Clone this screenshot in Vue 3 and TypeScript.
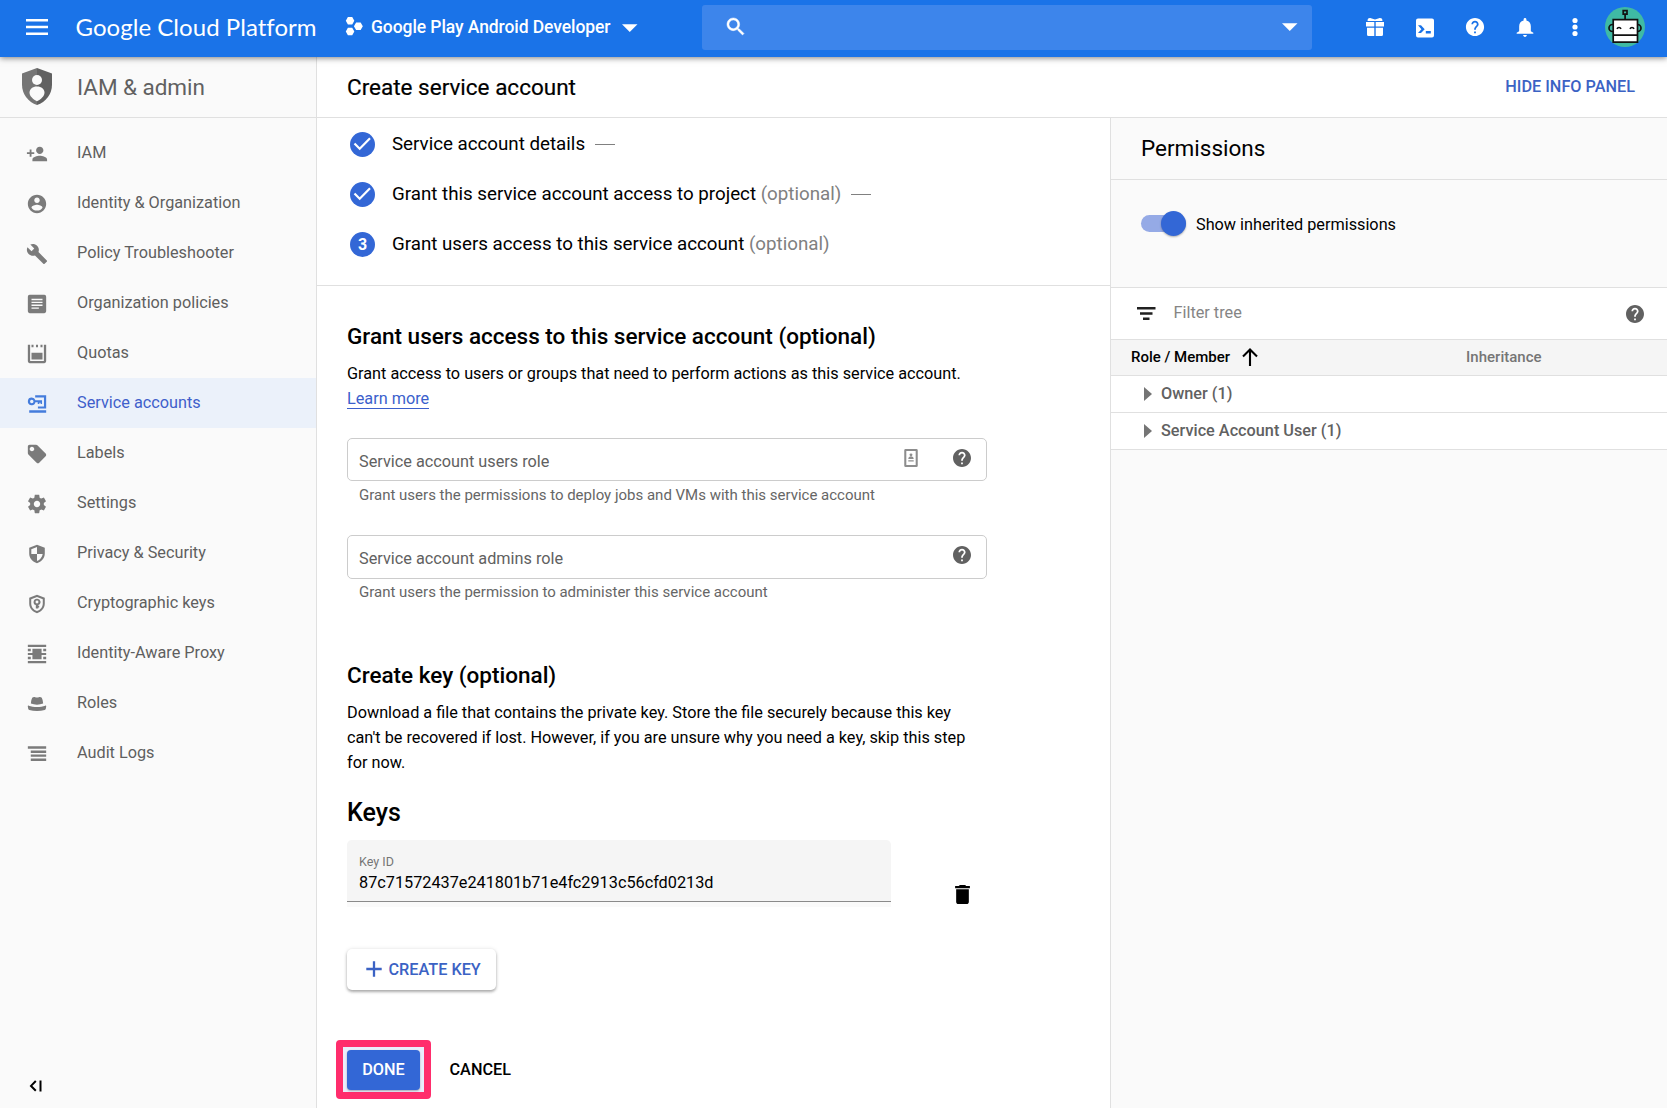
<script setup lang="ts">
import { ref } from 'vue'

interface NavItem { label: string; icon: string; active?: boolean }

const navItems: NavItem[] = [
  { label: 'IAM', icon: 'M15 12c2.21 0 4-1.79 4-4s-1.79-4-4-4-4 1.79-4 4 1.79 4 4 4zm-9-2V7H4v3H1v2h3v3h2v-3h3v-2H6zm9 4c-2.67 0-8 1.34-8 4v2h16v-2c0-2.66-5.33-4-8-4z' },
  { label: 'Identity & Organization', icon: 'M12 2C6.48 2 2 6.48 2 12s4.48 10 10 10 10-4.48 10-10S17.52 2 12 2zm0 3c1.66 0 3 1.34 3 3s-1.34 3-3 3-3-1.34-3-3 1.34-3 3-3zm0 14.2c-2.5 0-4.71-1.28-6-3.22.03-1.99 4-3.08 6-3.08 1.99 0 5.97 1.09 6 3.08-1.29 1.94-3.5 3.22-6 3.22z' },
  { label: 'Policy Troubleshooter', icon: 'M22.7 19l-9.1-9.1c.9-2.3.4-5-1.5-6.9-2-2-5-2.4-7.4-1.3L9 6 6 9 1.6 4.7C.4 7.1.9 10.1 2.9 12.1c1.9 1.9 4.6 2.4 6.9 1.5l9.1 9.1c.4.4 1 .4 1.4 0l2.3-2.3c.5-.4.5-1.1.1-1.4z' },
  { label: 'Organization policies', icon: 'M4 2h16a2 2 0 0 1 2 2v16a2 2 0 0 1-2 2H4a2 2 0 0 1-2-2V4a2 2 0 0 1 2-2zm2 4.4v1.5h12V6.4zm0 3.1V11h12V9.5zm0 3.1v1.5h12v-1.5zm0 3.1v1.5h8v-1.5z' },
  { label: 'Quotas', icon: 'M2 2h2.5v17.5h15V2H22v18a2 2 0 0 1-2 2H4a2 2 0 0 1-2-2zM6 2h2.2v2.5H6zm4.9 0h2.2v2.5h-2.2zm4.9 0H18v2.5h-2.2zM6 10.5h12V18H6z' },
  { label: 'Service accounts', active: true, icon: 'M10 2.5h12V17h-9v-2.4h6.6V4.9H10zM6.3 5a4.2 4.2 0 0 1 4 2.9h7.2v4h-1.6v-1.3h-1.3v1.3h-1.8v-1.7h-2.5A4.2 4.2 0 1 1 6.3 5zm0 2.3a1.9 1.9 0 1 0 0 3.8 1.9 1.9 0 0 0 0-3.8zM3.5 18.8H22v2.7H3.5z' },
  { label: 'Labels', icon: 'M21.41 11.58l-9-9C12.05 2.22 11.55 2 11 2H4c-1.1 0-2 .9-2 2v7c0 .55.22 1.05.59 1.42l9 9c.36.36.86.58 1.41.58s1.05-.22 1.41-.59l7-7c.37-.36.59-.86.59-1.41s-.23-1.06-.59-1.42zM6.5 9C5.12 9 4 7.88 4 6.5S5.12 4 6.5 4 9 5.12 9 6.5 7.88 9 6.5 9z' },
  { label: 'Settings', icon: 'M19.43 12.98c.04-.32.07-.64.07-.98s-.03-.66-.07-.98l2.11-1.65c.19-.15.24-.42.12-.64l-2-3.46c-.12-.22-.39-.3-.61-.22l-2.49 1c-.52-.4-1.08-.73-1.69-.98l-.38-2.65C14.46 2.18 14.25 2 14 2h-4c-.25 0-.46.18-.49.42l-.38 2.65c-.61.25-1.17.59-1.69.98l-2.49-1c-.23-.09-.49 0-.61.22l-2 3.46c-.13.22-.07.49.12.64l2.11 1.65c-.04.32-.07.65-.07.98s.03.66.07.98l-2.11 1.65c-.19.15-.24.42-.12.64l2 3.46c.12.22.39.3.61.22l2.49-1c.52.4 1.08.73 1.69.98l.38 2.65c.03.24.24.42.49.42h4c.25 0 .46-.18.49-.42l.38-2.65c.61-.25 1.17-.59 1.69-.98l2.49 1c.23.09.49 0 .61-.22l2-3.46c.12-.22.07-.49-.12-.64l-2.11-1.65zM12 15.5c-1.93 0-3.5-1.57-3.5-3.5s1.57-3.5 3.5-3.5 3.5 1.57 3.5 3.5-1.57 3.5-3.5 3.5z' },
  { label: 'Privacy & Security', icon: 'M12 2L3.5 5.2v6.3c0 5 3.6 9.3 8.5 10.5 4.9-1.2 8.5-5.5 8.5-10.5V5.2L12 2zm0 9.9h6.2c-.5 3.5-2.9 6.6-6.2 7.7v-7.7H5.8V6.7L12 4.4v7.5z' },
  { label: 'Cryptographic keys', icon: 'M12 2L3.5 5.2v6.3c0 5 3.6 9.3 8.5 10.5 4.9-1.2 8.5-5.5 8.5-10.5V5.2L12 2zm0 2.3l6.3 2.4v4.8c0 3.8-2.6 7.1-6.3 8.2-3.7-1.1-6.3-4.4-6.3-8.2V6.7L12 4.3zm0 1.9a3.6 3.6 0 0 0-1.3 7V17h2.7v-1.2h1v-1.8h-1v-.8A3.6 3.6 0 0 0 12 6.2zm0 2a1.6 1.6 0 1 1 0 3.2 1.6 1.6 0 0 1 0-3.2z' },
  { label: 'Identity-Aware Proxy', icon: 'M2 2h20v2.3H2zM2 19.7h20V22H2zM2 6.3h3.2v2.6H2zM18.8 6.3H22v2.6h-3.2zM2 15.1h3.2v2.6H2zM18.8 15.1H22v2.6h-3.2zM2 10.9h5V6.3h10v4.6h5v2.2h-5v4.6H7v-4.6H2z' },
  { label: 'Roles', icon: 'M6.8 5.2C7.5 4.2 9 4 10 4.5c1.3.6 2.7.6 4 0 1-.5 2.5-.3 3.2.7.8 1.5 1.3 4 1.5 6.3-2 .8-4.3 1.2-6.7 1.2s-4.7-.4-6.7-1.2c.2-2.3.7-4.8 1.5-6.3zM3 13.8c5 2 13 2 18 0 .7-.2 1.2.3 1 1.1l-.4 2.3c-.1.7-.5 1.1-1.2 1.3-5 1.5-11.8 1.5-16.8 0-.7-.2-1.1-.6-1.2-1.3L2 14.9c-.2-.8.3-1.3 1-1.1z' },
  { label: 'Audit Logs', icon: 'M2 3.5h20v2.7H2zM5.2 8.2H22v2.6H5.2zM5.2 12.5H22v2.6H5.2zM5.2 16.8H22v2.7H5.2z' },
]

const helpPath = 'M12 2C6.48 2 2 6.48 2 12s4.48 10 10 10 10-4.48 10-10S17.52 2 12 2zm1 17h-2v-2h2v2zm2.07-7.75l-.9.92C13.45 12.9 13 13.5 13 15h-2v-.5c0-1.1.45-2.1 1.17-2.83l1.24-1.26c.37-.36.59-.86.59-1.41 0-1.1-.9-2-2-2s-2 .9-2 2H8c0-2.21 1.79-4 4-4s4 1.79 4 4c0 .88-.36 1.68-.93 2.25z'

const steps = [
  { label: 'Service account details', optional: false, done: true },
  { label: 'Grant this service account access to project', optional: true, done: true },
  { label: 'Grant users access to this service account', optional: true, done: false },
]

const fields = [
  { label: 'Service account users role', hint: 'Grant users the permissions to deploy jobs and VMs with this service account', contact: true },
  { label: 'Service account admins role', hint: 'Grant users the permission to administer this service account', contact: false },
]

const roles = ['Owner (1)', 'Service Account User (1)']
const showInherited = ref(true)
</script>

<template>
  <div class="app">
    <header class="topbar">
      <svg class="menu" viewBox="0 0 22 16"><path d="M0 0h22v2.5H0zM0 6.7h22v2.5H0zM0 13.4h22v2.5H0z" /></svg>
      <div class="brand">Google Cloud Platform</div>
      <svg class="project-icon" viewBox="0 0 18 20"><path d="M2 0h4.6l2.2 4-2.2 4H2L-.2 4zM2 11.2h4.6l2.2 4-2.2 4H2l-2.2-4zM10.7 5.7h4.8l2.3 4-2.3 4h-4.8l-2.3-4z" /></svg>
      <div class="project">Google Play Android Developer</div>
      <svg class="caret" viewBox="0 0 16 8"><path d="M0 0h16L8 8z" /></svg>
      <div class="search">
        <svg class="lens" viewBox="3 3 17.5 17.5"><path stroke="#fff" stroke-width=".5" d="M15.5 14h-.79l-.28-.27C15.41 12.59 16 11.11 16 9.5 16 5.91 13.09 3 9.5 3S3 5.91 3 9.5 5.91 16 9.5 16c1.61 0 3.09-.59 4.23-1.57l.27.28v.79l5 4.99L20.49 19l-4.99-5zm-6 0C7.01 14 5 11.99 5 9.5S7.01 5 9.5 5 14 7.01 14 9.5 11.99 14 9.5 14z" /></svg>
        <svg class="caret" viewBox="0 0 16 8"><path d="M0 0h16L8 8z" /></svg>
      </div>
      <nav class="tools">
        <svg viewBox="0 0 20 20"><path d="M2.6 3.2C2.6 1.4 4.3.6 6 1.2L10 2.6l4-1.4c1.7-.6 3.4.2 3.4 2v.9H2.6zM1 5h8.3v4.5H1zM10.7 5H19v4.5h-8.3zM2 10.8h7.3V19H3.5A1.5 1.5 0 0 1 2 17.5zM10.7 10.8H18v6.7a1.5 1.5 0 0 1-1.5 1.5h-5.8z" /></svg>
        <svg class="shell" viewBox="0 0 20 20"><path fill-rule="evenodd" d="M3 .5h14a2 2 0 0 1 2 2v15a2 2 0 0 1-2 2H3a2 2 0 0 1-2-2v-15a2 2 0 0 1 2-2zM3 7.3l3.4 3.9L3 15.1h3l3.7-3.9L6 7.3zM10.8 13.1v2.4h5v-2.4z" /></svg>
        <svg viewBox="1 1 22 22"><path :d="helpPath" /></svg>
        <svg viewBox="1.2 1 21.6 21.6"><path d="M12 22.5c1.1 0 2-.9 2-2h-4c0 1.1.89 2 2 2zm6.3-6v-5.5c0-3.07-1.64-5.64-4.8-6.32V3.5c0-.83-.67-1.5-1.5-1.5s-1.5.67-1.5 1.5v1.18C7.33 5.36 5.7 7.92 5.7 11v5.5L3 18v1h18v-1z" /></svg>
        <svg viewBox="0 0 20 20"><circle cx="10" cy="3.5" r="2.6" /><circle cx="10" cy="10" r="2.6" /><circle cx="10" cy="16.5" r="2.6" /></svg>
      </nav>
      <svg class="avatar" viewBox="0 0 40 40">
        <circle cx="20" cy="20" r="20" fill="#3fbaa4" />
        <g fill="#fff" stroke="#111" stroke-width="1.7">
          <circle cx="7.5" cy="21" r="3.5" fill="#3fbaa4" /><circle cx="32.5" cy="21" r="3.5" fill="#3fbaa4" />
          <path d="M8.2 12.7h24.3v22.5H8.2zM8.2 28.2h24.3" />
          <path d="M18.2 3.6h3.8v3.5h-3.8zM20.1 7.1v5.6" fill="none" />
          <path d="M12 21.8c.8-1.7 3.2-1.7 4 0M25 21.8c.8-1.7 3.2-1.7 4 0" fill="none" />
        </g>
      </svg>
    </header>

    <div class="body">
      <aside class="sidebar">
        <div class="product">
          <svg viewBox="0 0 30 37">
            <path fill="#757575" d="M15 0L0 5.6v11.1C0 26 6.2 34.2 15 37z" />
            <path fill="#616161" d="M15 0l15 5.6v11.1C30 26 23.8 34.2 15 37z" />
            <circle cx="15" cy="12" r="5" fill="#fafafa" />
            <path fill="#fafafa" d="M15 18.5c4.5 0 7.5 2.7 7.5 6.3 0 3.3-3.8 6.8-7.5 8.5-3.7-1.7-7.5-5.2-7.5-8.5 0-3.6 3-6.3 7.5-6.3z" />
          </svg>
          <span>IAM &amp; admin</span>
        </div>
        <nav class="nav">
          <a v-for="item in navItems" :key="item.label" class="nav-item" :class="{ active: item.active }">
            <svg viewBox="0 0 24 24"><path fill-rule="evenodd" :d="item.icon" /></svg>
            <span>{{ item.label }}</span>
          </a>
        </nav>
        <svg class="collapse" viewBox="0 0 12 12"><path d="M5.8 1L1 5.9l4.8 4.9M10.5.5v11" /></svg>
      </aside>

      <div class="content">
        <div class="titlebar">
          <h1>Create service account</h1>
          <button class="link-btn">HIDE INFO PANEL</button>
        </div>
        <div class="columns">
          <main class="main">
            <section class="steps">
              <div v-for="(step, i) in steps" :key="step.label" class="step">
                <span class="bullet">
                  <svg v-if="step.done" viewBox="0 0 25 25"><path d="M4.5 11.5l5.2 5.2L20 6.2" /></svg>
                  <template v-else>{{ i + 1 }}</template>
                </span>
                <span>{{ step.label }} <span v-if="step.optional" class="optional">(optional)</span></span>
                <span v-if="step.done" class="dash"></span>
              </div>
            </section>
            <section class="form">
              <h2>Grant users access to this service account (optional)</h2>
              <p class="text">Grant access to users or groups that need to perform actions as this service account.<br /><a class="learn">Learn more</a></p>
              <div class="fields">
                <div v-for="field in fields" :key="field.label" class="field">
                  <div class="input">
                    <span class="placeholder">{{ field.label }}</span>
                    <svg v-if="field.contact" class="contact" viewBox="0 0 15 20">
                      <path fill="#8d8d8d" fill-rule="evenodd" d="M1.5 0h12A1.5 1.5 0 0 1 15 1.5v17a1.5 1.5 0 0 1-1.5 1.5h-12A1.5 1.5 0 0 1 0 18.5v-17A1.5 1.5 0 0 1 1.5 0zM2.3 2.3v15.4h10.4V2.3z" />
                      <circle cx="7.5" cy="6.5" r="1.6" fill="#8d8d8d" />
                      <path fill="#8d8d8d" d="M4.5 11c0-3.8 6-3.8 6 0zM4.5 12.5h6V14h-6z" />
                    </svg>
                    <svg class="help" viewBox="2 2 20 20"><path :d="helpPath" /></svg>
                  </div>
                  <div class="hint">{{ field.hint }}</div>
                </div>
              </div>
              <h2 class="key-title">Create key (optional)</h2>
              <p class="text">Download a file that contains the private key. Store the file securely because this key<br />can't be recovered if lost. However, if you are unsure why you need a key, skip this step<br />for now.</p>
              <h3>Keys</h3>
              <div class="key-row">
                <div class="key-box">
                  <div class="key-field">
                    <div class="key-label">Key ID</div>
                    <div class="key-value">87c71572437e241801b71e4fc2913c56cfd0213d</div>
                  </div>
                </div>
                <svg class="trash" viewBox="5 3 14 18"><path d="M6 19c0 1.1.9 2 2 2h8c1.1 0 2-.9 2-2V7H6v12zM19 4h-3.5l-1-1h-5l-1 1H5v2h14V4z" /></svg>
              </div>
              <button class="create">
                <svg viewBox="0 0 16 16"><path d="M8 .3v15.4M.3 8h15.4" /></svg>CREATE KEY
              </button>
              <div class="actions">
                <div class="highlight"><button class="done">DONE</button></div>
                <button class="cancel">CANCEL</button>
              </div>
            </section>
          </main>

          <aside class="panel">
            <div class="panel-title">Permissions</div>
            <div class="toggle-row">
              <span class="toggle" :class="{ on: showInherited }"><span class="thumb"></span></span>
              <span>Show inherited permissions</span>
            </div>
            <div class="filter">
              <svg class="filter-icon" viewBox="0 0 18.5 13"><path d="M0 0h18.5v2.5H0zM3 5.2h12.5v2.5H3zM6 10.4h6.5v2.5H6z" /></svg>
              <span>Filter tree</span>
              <svg class="help" viewBox="2 2 20 20"><path :d="helpPath" /></svg>
            </div>
            <div class="thead">
              <span class="role">Role / Member</span>
              <svg viewBox="0 0 16 18"><path d="M8 18V1.5M1 8.5l7-7 7 7" /></svg>
              <span class="inherit">Inheritance</span>
            </div>
            <div v-for="role in roles" :key="role" class="trow">
              <svg viewBox="0 0 8 14"><path d="M0 0l8 7-8 7z" /></svg>
              <span>{{ role }}</span>
            </div>
          </aside>
        </div>
      </div>
    </div>
  </div>
</template>

<style>
html, body { margin: 0; background: #fff; }
</style>

<style scoped>
* { box-sizing: border-box; }
.app { width: 1667px; height: 1108px; overflow: hidden; display: flex; flex-direction: column; font-family: Roboto, "Liberation Sans", sans-serif; font-size: 16.25px; color: #000; }
h1, h2, h3, p { margin: 0; }
button { font: inherit; font-weight: 500; border: 0; background: none; padding: 0; }
svg { display: block; flex: none; overflow: visible; }

.topbar { flex: none; height: 57px; display: flex; align-items: center; background: #1a73e8; color: #fff; fill: #fff; position: relative; z-index: 2; padding-left: 26px; box-shadow: 0 1px 6px rgba(0, 0, 0, .5); }
.menu { width: 22px; height: 16px; margin-bottom: 3px; }
.brand { font-family: Lato, sans-serif; font-size: 24px; letter-spacing: .04px; line-height: 30px; width: 298px; padding-left: 27.5px; margin-bottom: 4px; white-space: nowrap; }
.project-icon { width: 17px; height: 19px; margin-bottom: 4px; }
.project { font-size: 17.5px; font-weight: 500; letter-spacing: -.08px; width: 259px; padding-left: 8px; margin-bottom: 3px; white-space: nowrap; }
.caret { width: 15.5px; height: 8px; margin-bottom: 1.5px; }
.search { width: 610px; height: 45px; margin: 0 0 2px 64px; padding: 0 14px 4px 25px; border-radius: 3px; background: #3d85eb; display: flex; justify-content: space-between; align-items: center; }
.lens { width: 17px; height: 17px; margin-top: 1.5px; }
.search .caret { margin: 3px 0 0; }
.tools { display: flex; gap: 30px; margin: 0 0 2.5px 53px; }
.tools svg { width: 20px; height: 20px; }
.tools .shell { margin-top: 1.5px; }
.avatar { width: 40px; height: 40px; margin: 0 0 3px 20px; }

.body { flex: 1; display: flex; min-height: 0; }
.sidebar { width: 317px; flex: none; background: #fafafa; border-right: 1px solid #e0e0e0; display: flex; flex-direction: column; }
.product { height: 61px; padding: 0 0 1px 22px; border-bottom: 1px solid #e0e0e0; display: flex; align-items: center; font-size: 22.5px; color: #616161; }
.product svg { width: 30px; height: 37px; margin-right: 25px; }
.product span { letter-spacing: -.05px; }
.nav { padding-top: 10px; flex: 1; }
.nav-item { height: 50px; display: flex; align-items: center; padding-left: 26px; color: #5f5f5f; }
.nav-item svg { width: 22px; height: 22px; margin: 1px 29px 0 0; fill: #7b7b7b; }
.nav-item span { margin-bottom: 1px; }
.nav-item.active { background: #ebf1fa; color: #3f5fcb; }
.nav-item.active svg { fill: #447cdc; }
.collapse { width: 12px; height: 12px; margin: 0 0 16px 30px; fill: none; stroke: #000; stroke-width: 2; }

.content { flex: 1; display: flex; flex-direction: column; min-width: 0; }
.titlebar { height: 61px; border-bottom: 1px solid #e0e0e0; display: flex; justify-content: space-between; align-items: center; padding: 0 32px 0 30px; }
h1 { font-size: 22.5px; font-weight: 400; margin-bottom: 1px; -webkit-text-stroke: .2px #000; }
.link-btn { color: #3b62c4; margin-bottom: 2px; }
.columns { flex: 1; display: flex; min-height: 0; }
.main { width: 793px; flex: none; }
.steps { height: 168px; border-bottom: 1px solid #e0e0e0; padding: 1px 0 0 33px; }
.step { height: 50px; display: flex; align-items: center; font-size: 18.75px; white-space: nowrap; }
.step > span:nth-child(2) { letter-spacing: -.01px; }
.bullet { width: 25px; height: 25px; border-radius: 50%; background: #3367d6; color: #fff; font-size: 16px; font-weight: 700; display: flex; align-items: center; justify-content: center; margin-right: 17px; }
.bullet svg { width: 25px; height: 25px; fill: none; stroke: #fff; stroke-width: 2.2; }
.optional { color: #808080; }
.dash { width: 20px; height: 1px; background: #808080; margin-left: 10px; }

.form { padding: 35px 0 0 30px; }
h2 { font-size: 22.5px; font-weight: 500; line-height: 30px; }
.text { line-height: 25px; margin-top: 10px; white-space: nowrap; }
.learn { color: #3b5fcc; border-bottom: 1px solid #3b5fcc; }
.fields { padding-top: 27px; }
.field { height: 97px; width: 640px; }
.input { height: 43px; border: 1px solid #ccc; border-radius: 5px; display: flex; align-items: center; padding: 0 15px 0 11px; }
.field:last-child .input { height: 44px; padding-bottom: 1px; }
.placeholder { flex: 1; color: #616161; margin-top: 3px; }
.contact { width: 14px; height: 18px; margin: 0 35px 3px 0; }
.help { width: 18px; height: 18px; fill: #616161; margin-bottom: 3px; }
.hint { font-size: 15px; line-height: 18px; color: #666; padding: 5px 0 0 12px; }
.field:last-child .hint { padding-top: 4px; }
.key-title { margin-top: 28px; }
h3 { font-size: 25px; font-weight: 500; line-height: 30px; margin-top: 23px; }
.key-row { display: flex; margin-top: 12px; }
.key-box { width: 544px; height: 67px; background: #fafafa; border-radius: 5px 5px 0 0; }
.key-field { height: 62px; background: #f5f5f5; border-bottom: 1px solid #8a8a8a; border-radius: 5px 5px 0 0; padding: 13px 0 0 12px; }
.key-label { font-size: 12.5px; line-height: 17px; color: #757575; }
.key-value { line-height: 22px; margin-top: 2px; }
.trash { width: 15px; height: 19px; margin: 45px 0 0 63.5px; }
.create { width: 149px; height: 41px; margin-top: 42px; border-radius: 5px; display: flex; align-items: center; padding: 0 0 1px 18.5px; color: #3b62c4; background: #fff; box-shadow: 0 2px 3px rgba(0, 0, 0, .3), 0 0 4px rgba(0, 0, 0, .1); white-space: nowrap; }
.create svg { width: 16px; height: 16px; margin-right: 7px; fill: none; stroke: #3b62c4; stroke-width: 2.3; }
.actions { display: flex; align-items: center; margin: 50px 0 0 -11px; }
.highlight { width: 95px; height: 59px; border: 7px solid #ff2d6c; border-radius: 4px; background: #e9eefb; display: flex; align-items: center; justify-content: center; }
.done { width: 73px; height: 40px; border-radius: 4px; background: #3367d6; color: #fff; box-shadow: 0 1px 2px rgba(0, 0, 0, .3); padding-bottom: 1px; }
.cancel { margin: 0 0 1px 18.5px; }

.panel { flex: 1; background: #fafafa; border-left: 1px solid #e0e0e0; }
.panel-title { height: 62px; border-bottom: 1px solid #e0e0e0; padding: 0 0 1px 30px; display: flex; align-items: center; font-size: 22.5px; }
.toggle-row { height: 108px; border-bottom: 1px solid #e0e0e0; display: flex; align-items: flex-start; padding: 31px 0 0 30px; line-height: 27px; }
.toggle { width: 41px; height: 17px; margin: 4px 14px 0 0; border-radius: 9px; background: #95aae6; display: flex; align-items: center; }
.toggle.on { justify-content: flex-end; width: 45px; margin-right: 10px; }
.thumb { width: 25px; height: 25px; border-radius: 50%; background: #3367d6; box-shadow: 0 1px 2px rgba(0, 0, 0, .3); }
.filter { height: 52px; background: #fff; border-bottom: 1px solid #e0e0e0; display: flex; align-items: center; padding: 0 23px 0 26px; color: #858585; }
.filter-icon { width: 18.5px; height: 13px; fill: #212121; margin-right: 18px; }
.filter span { flex: 1; margin-bottom: 2px; }
.filter .help { margin: 0; }
.thead { height: 36px; background: #f5f5f5; border-bottom: 1px solid #e0e0e0; display: flex; align-items: center; padding-left: 20px; font-size: 15px; font-weight: 500; }
.thead span { margin-bottom: 2px; }
.thead svg { width: 16px; height: 18px; margin: 0 0 1px 12px; fill: none; stroke: #000; stroke-width: 2.1; }
.inherit { margin-left: 208px; color: #757575; }
.trow { height: 37px; background: #fff; border-bottom: 1px solid #e0e0e0; display: flex; align-items: center; padding-left: 33px; color: #616161; font-weight: 500; }
.trow svg { width: 8px; height: 14px; fill: #757575; margin-right: 9px; }
.trow span { margin-bottom: 1px; }
</style>
